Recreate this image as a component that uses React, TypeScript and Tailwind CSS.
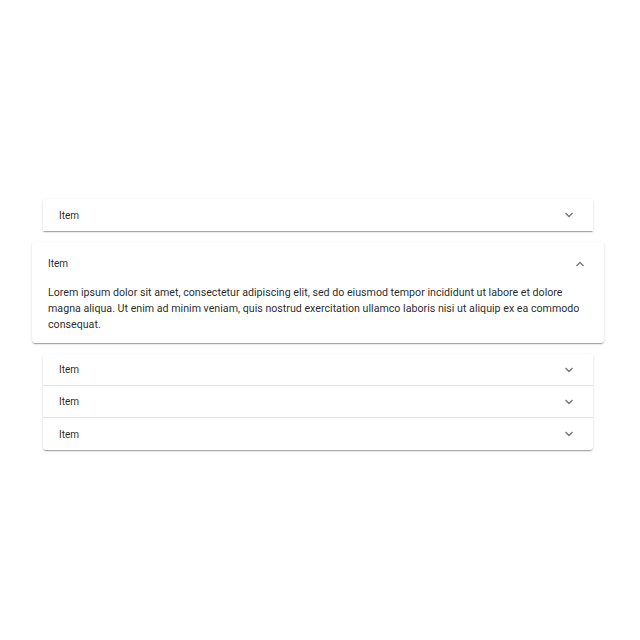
import React from "react";

const Chevron = ({ up = false }: { up?: boolean }) => (
  <svg width="10" height="6" viewBox="0 0 10 6" className="shrink-0">
    <polyline
      points={up ? "1.5,5 5,1.5 8.5,5" : "1.5,1 5,4.5 8.5,1"}
      fill="none"
      stroke="rgba(0,0,0,0.54)"
      strokeWidth="1.4"
    />
  </svg>
);

const shadow =
  "shadow-[0_2px_1px_-1px_rgba(0,0,0,0.2),0_1px_1px_0_rgba(0,0,0,0.14),0_1px_3px_0_rgba(0,0,0,0.12)]";

const Header = ({ expanded = false, h = "h-[32px]" }: { expanded?: boolean; h?: string }) => (
  <div className={`flex items-center justify-between pl-4 pr-[19px] ${expanded ? "h-[43px]" : h}`}>
    <span className="text-[10px] text-[rgba(0,0,0,0.87)]">Item</span>
    <Chevron up={expanded} />
  </div>
);

export default function App() {
  return (
    <div
      className="min-h-[640px] w-[640px] bg-white pt-[199px]"
      style={{ fontFamily: "Roboto, 'Noto Sans', sans-serif" }}
    >
      <div className="ml-[43px] w-[550px] flex flex-col">
        <div className={`bg-white rounded-t-[3px] ${shadow}`}>
          <Header />
        </div>
        <div className={`bg-white rounded-[3px] -mx-[11px] my-[11px] ${shadow}`}>
          <Header expanded />
          <div className="px-4 pb-[10px] text-[10.67px] leading-[16px] text-[rgba(0,0,0,0.87)]">
            Lorem ipsum dolor sit amet, consectetur adipiscing elit, sed do eiusmod tempor incididunt ut labore et dolore
            magna aliqua. Ut enim ad minim veniam, quis nostrud exercitation ullamco laboris nisi ut aliquip ex ea
            commodo consequat.
          </div>
        </div>
        <div className={`bg-white rounded-[3px] ${shadow} flex flex-col`}>
          <Header h="h-[31px]" />
          <div className="border-t border-[rgba(0,0,0,0.12)]">
            <Header h="h-[31px]" />
          </div>
          <div className="border-t border-[rgba(0,0,0,0.12)]">
            <Header h="h-[32px]" />
          </div>
        </div>
      </div>
    </div>
  );
}
